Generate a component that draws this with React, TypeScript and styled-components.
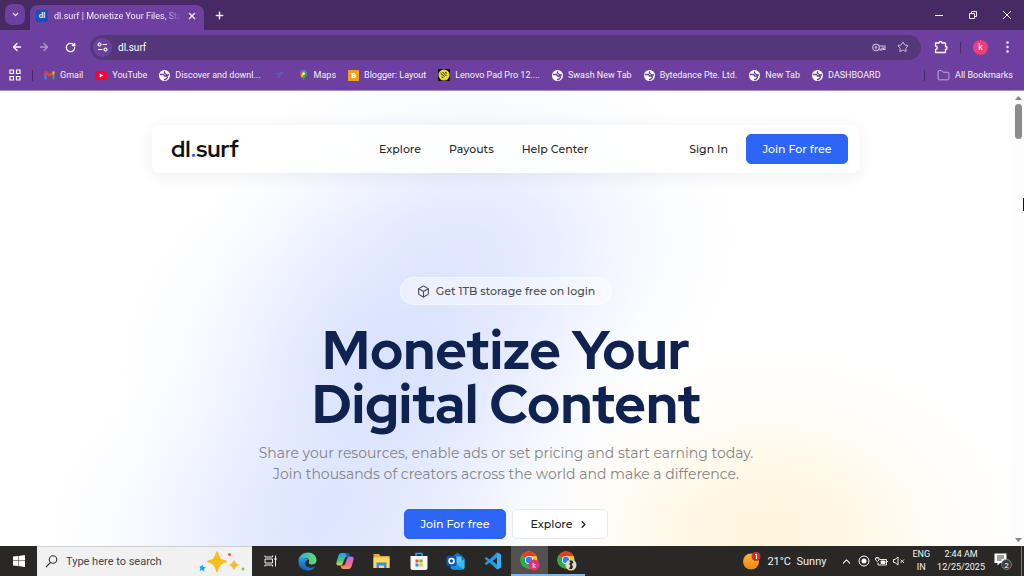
import React from "react";
import styled, { createGlobalStyle } from "styled-components";
import { ArrowLeft, ArrowRight, Box, ChevronDown, ChevronRight, ChevronUp, Folder, Plus, RotateCw, Star, X } from "lucide-react";

const uiFont = `"Segoe UI", Roboto, "Open Sans", sans-serif`;
const siteFont = `"Montserrat", Inter, sans-serif`;
const displayFont = `"Red Hat Display", "Montserrat", Inter, sans-serif`;

/* A soft round glow: strongest in the middle, fading out like a blurred disc. */
const glow = (rgb: string, alpha: number, size: string, at: string) =>
  `radial-gradient(ellipse ${size} at ${at}, rgba(${rgb}, ${alpha}), rgba(${rgb}, ${alpha * 0.82}) 25%, rgba(${rgb}, ${alpha * 0.45}) 50%, rgba(${rgb}, ${alpha * 0.13}) 75%, rgba(${rgb}, 0) 100%)`;

const GlobalStyle = createGlobalStyle`
  * { box-sizing: border-box; }
  body { margin: 0; background: #fff; }
  button { font: inherit; border: 0; padding: 0; margin: 0; background: none; color: inherit; cursor: pointer; }
  a { color: inherit; text-decoration: none; }
  svg { display: block; flex: none; }
`;

const Screen = styled.div`
  display: flex;
  flex-direction: column;
  height: 100vh;
  overflow: hidden;
  font-family: ${uiFont};
`;

/* Browser chrome */
const TabStrip = styled.div`
  display: flex;
  align-items: flex-end;
  height: 30px;
  flex: none;
  padding-left: 5px;
  background: #472a63;
  color: #f3eef8;
`;
const TabSearch = styled.button`
  display: grid;
  place-items: center;
  width: 20px;
  height: 21px;
  margin-bottom: 5px;
  border-radius: 7px;
  background: #6d409f;
`;
const Tab = styled.div`
  display: flex;
  align-items: center;
  width: 174px;
  height: 25px;
  margin-left: 5px;
  padding: 0 7px 4px 6px;
  gap: 6px;
  border-radius: 8px 8px 0 0;
  background: #6d409f;
  font-size: 9px;
`;
const Favicon = styled.span`
  display: grid;
  place-items: center;
  width: 12px;
  height: 12px;
  border-radius: 2px;
  background: #164fb5;
  font-size: 8px;
  line-height: 12px;
  font-weight: 600;
`;
const TabTitle = styled.span`
  flex: 1;
  min-width: 0;
  overflow: hidden;
  white-space: nowrap;
  mask-image: linear-gradient(90deg, #000 85%, transparent);
`;
const NewTab = styled.button`
  display: grid;
  place-items: center;
  width: 30px;
  height: 30px;
`;
const WindowControls = styled.div`
  display: flex;
  align-self: stretch;
  margin-left: auto;
`;
const WindowButton = styled.button`
  display: grid;
  place-items: center;
  width: 34px;
  height: 30px;
`;
const Toolbar = styled.div`
  display: flex;
  align-items: center;
  height: 34px;
  flex: none;
  padding: 0 3px;
  background: #6d409f;
  color: #fff;
`;
const ToolButton = styled.button<{ $dim?: boolean }>`
  display: grid;
  place-items: center;
  width: 27px;
  height: 26px;
  opacity: ${(p) => (p.$dim ? 0.45 : 1)};
`;
const AddressBar = styled.div`
  display: flex;
  align-items: center;
  flex: 1;
  height: 25px;
  margin: 0 6px;
  padding: 0 6px 0 3px;
  border-radius: 13px;
  background: #54367a;
`;
const SiteInfo = styled.button`
  display: grid;
  place-items: center;
  width: 19px;
  height: 19px;
  border-radius: 50%;
  background: #6d409f;
`;
const Address = styled.input`
  flex: 1;
  min-width: 0;
  margin-left: 6px;
  padding: 0;
  border: 0;
  outline: 0;
  background: transparent;
  color: #fff;
  font: 10px ${uiFont};
`;
const BarIcon = styled.button`
  display: grid;
  place-items: center;
  width: 24px;
  height: 24px;
  color: #cfc3dd;
`;
const Divider = styled.span`
  width: 1px;
  height: 11px;
  background: #482b66;
`;
const Avatar = styled.button`
  width: 15px;
  height: 15px;
  margin: 0 6px 0 12px;
  border-radius: 50%;
  background: #ec407a;
  font-size: 9px;
  line-height: 14px;
`;
const Bookmarks = styled.nav`
  display: flex;
  align-items: center;
  height: 27px;
  flex: none;
  padding: 0 11px 4px 9px;
  border-bottom: 1px solid #a78cc4;
  background: #6d409f;
  color: #f6f1fb;
  font-size: 9px;
  white-space: nowrap;
`;
const BookmarkList = styled.div`
  display: flex;
  flex: 1;
  align-items: center;
  gap: 12px;
  min-width: 0;
  margin-left: 11px;
  overflow: hidden;
`;
const Bookmark = styled.a`
  display: flex;
  align-items: center;
  gap: 5px;
`;
const AllBookmarks = styled.button`
  display: flex;
  align-items: center;
  gap: 5px;
  margin-left: 12px;
`;

/* Web page */
const Viewport = styled.div`
  position: relative;
  display: flex;
  flex: 1;
  min-height: 0;
`;
const Page = styled.main`
  flex: 1;
  min-width: 0;
  padding: 34px 24px 0;
  overflow: hidden;
  font-family: ${siteFont};
  background:
    ${glow("255, 243, 214", 0.85, "260px 190px", "76% 98%")},
    ${glow("206, 218, 255", 0.55, "270px 200px", "47% 33%")},
    ${glow("206, 218, 255", 0.75, "270px 230px", "38% 62%")},
    ${glow("206, 218, 255", 0.65, "270px 200px", "31% 98%")},
    #fff;
`;
const SiteHeader = styled.header`
  display: grid;
  grid-template-columns: 208px 1fr auto;
  align-items: center;
  max-width: 708px;
  height: 48px;
  margin: 0 auto;
  padding: 0 12px 0 19px;
  border-radius: 7px;
  background: rgba(255, 255, 255, 0.86);
  box-shadow: 0 3px 16px rgba(30, 30, 60, 0.07);
  color: #292929;
  font-size: 11px;
  font-weight: 500;
`;
const Logo = styled.a`
  color: #111;
  font-family: ${displayFont};
  font-size: 23px;
  line-height: 28px;
  font-weight: 700;
  span { color: #2d66f6; }
`;
const SiteLinks = styled.nav`
  display: flex;
  gap: 28px;
`;
const Account = styled.div`
  display: flex;
  align-items: center;
  gap: 18px;
`;
const Action = styled.button<{ $outline?: boolean }>`
  display: flex;
  align-items: center;
  justify-content: center;
  gap: 6px;
  width: ${(p) => (p.$outline ? 96 : 102)}px;
  height: 30px;
  border-radius: 5px;
  border: 1px solid ${(p) => (p.$outline ? "#e9eaf0" : "#2d66f6")};
  background: ${(p) => (p.$outline ? "#fff" : "#2d66f6")};
  color: ${(p) => (p.$outline ? "#222" : "#fff")};
  font-size: 11px;
  font-weight: 500;
`;
const Hero = styled.section`
  display: flex;
  flex-direction: column;
  align-items: center;
  padding-top: 104px;
  text-align: center;
`;
const Badge = styled.p`
  display: flex;
  align-items: center;
  gap: 6px;
  height: 28px;
  margin: 0;
  padding: 0 16px;
  border: 1px solid rgba(255, 255, 255, 0.45);
  border-radius: 14px;
  background: rgba(255, 255, 255, 0.42);
  color: #4d4d52;
  font-size: 11px;
  font-weight: 500;
`;
const Headline = styled.h1`
  margin: 18px 0 0;
  color: #102350;
  font-family: ${displayFont};
  font-size: 54px;
  line-height: 54px;
  font-weight: 800;
`;
const Lead = styled.p`
  margin: 12px 0 0;
  color: #858585;
  font-size: 14px;
  line-height: 21px;
`;
const Actions = styled.div`
  display: flex;
  gap: 6px;
  margin-top: 24px;
`;
const Scrollbar = styled.div`
  display: flex;
  flex-direction: column;
  align-items: center;
  justify-content: space-between;
  width: 12px;
  padding: 5px 0 4px;
  background: #fcfcfc;
`;
const Thumb = styled.span`
  width: 7px;
  height: 35px;
  margin: 4px 0 auto;
  border-radius: 4px;
  background: #8b8b8b;
`;
const Pointer = styled.span`
  position: absolute;
  right: 0;
  top: 107px;
  width: 1px;
  height: 13px;
  background: #111;
`;

/* Taskbar */
const Taskbar = styled.footer`
  display: flex;
  height: 30px;
  flex: none;
  background: #292827;
  color: #f2f2f2;
`;
const TaskButton = styled.button<{ $active?: boolean; $open?: boolean }>`
  display: grid;
  place-items: center;
  width: 37px;
  height: 30px;
  background: ${(p) => (p.$active ? "#525150" : "none")};
  box-shadow: ${(p) => (p.$open ? "inset 0 -2px #76b9ed" : "none")};
`;
const SearchBox = styled.label`
  display: flex;
  align-items: center;
  width: 215px;
  padding: 0 7px 0 8px;
  gap: 8px;
  background: #f1f1f1;
  border-top: 1px solid #cfcfcf;
  color: #333;
`;
const SearchInput = styled.input`
  flex: 1;
  min-width: 0;
  padding: 0;
  border: 0;
  outline: 0;
  background: transparent;
  font: 11px ${uiFont};
  &::placeholder { color: #444; opacity: 1; }
`;
const Tray = styled.div`
  display: flex;
  align-items: center;
  margin-left: auto;
  font-size: 11px;
  white-space: nowrap;
`;
const Weather = styled.button`
  display: flex;
  align-items: center;
  gap: 6px;
  margin-right: 14px;
`;
const TrayIcons = styled.div`
  display: flex;
  align-items: center;
  gap: 5px;
`;
const TrayText = styled.button`
  margin-left: 7px;
  font-size: 9px;
  line-height: 13px;
  text-align: center;
`;
const Notifications = styled.button`
  margin: 0 9px 0 9px;
`;
const ShowDesktop = styled.button`
  width: 3px;
  height: 30px;
  border-left: 1px solid #777;
`;

const Globe = () => (
  <svg width="11" height="11" viewBox="0 0 22 22">
    <circle cx="11" cy="11" r="11" fill="#fff" />
    <path d="M2 9h6q3 0 3 3h3q3 0 3 3l-4 4h-3M12 3q-3 3 0 4t3 3h5" fill="none" stroke="#6d409f" strokeWidth="2.6" />
  </svg>
);
const GmailIcon = () => (
  <svg width="11" height="9" viewBox="0 0 22 18">
    <path d="M1 4v13h4V8z" fill="#4285f4" /><path d="M17 8v9h4V4z" fill="#34a853" />
    <path d="M1 5V2c0-2 2-2 4-1l6 5 6-5v6l-6 5-6-5z" fill="#ea4335" /><path d="M17 1c2-1 4-1 4 1v3l-4 4z" fill="#fbbc04" />
  </svg>
);
const YouTubeIcon = () => (
  <svg width="12" height="9" viewBox="0 0 24 18"><rect width="24" height="18" rx="5" fill="#ff0033" /><path d="M9.500 5v8l7-4z" fill="#fff" /></svg>
);
const PlaneIcon = () => (
  <svg width="13" height="10" viewBox="0 0 26 20" fill="none" stroke="#6260c4" strokeWidth="1.600"><path d="M7 7l13-2-9 11-1-6zM11 10l7-4" /></svg>
);
const MapsIcon = () => (
  <svg width="11" height="12" viewBox="0 0 22 24">
    <path d="M11 23c-1-6-7-8-7-14a7 7 0 0114 0c0 6-6 8-7 14z" fill="#34a853" />
    <path d="M4 9a7 7 0 013-6l5 5-6 7c-1-2-2-4-2-6z" fill="#ea4335" /><path d="M7 3c3-2 7-1 9 1l-5 6z" fill="#4285f4" />
    <path d="M5 13l6-6 2 4-5 6z" fill="#fbbc04" /><circle cx="11" cy="9" r="2.500" fill="#fff" />
  </svg>
);
const BloggerIcon = () => (
  <svg width="11" height="11" viewBox="0 0 22 22"><rect width="22" height="22" rx="1" fill="#f79b25" /><path d="M7 6h5a3 3 0 013 4 3 3 0 011 3c0 2-1 3-3 3H7z" fill="#fff" /><path d="M10 9h2M10 13h3" stroke="#f79b25" strokeWidth="1.500" /></svg>
);
const LenovoIcon = () => (
  <svg width="12" height="12" viewBox="0 0 24 24"><rect width="24" height="24" fill="#111" /><circle cx="12" cy="12" r="11" fill="#e6df2c" /><path d="M5 8l8 7M9 6l8 8M7 15l4 3M14 6l4 3" fill="none" stroke="#222" strokeWidth="2" /></svg>
);

const bookmarks: { label: string; icon: React.ReactNode }[] = [
  { label: "Gmail", icon: <GmailIcon /> },
  { label: "YouTube", icon: <YouTubeIcon /> },
  { label: "Discover and downl...", icon: <Globe /> },
  { label: "", icon: <PlaneIcon /> },
  { label: "Maps", icon: <MapsIcon /> },
  { label: "Blogger: Layout", icon: <BloggerIcon /> },
  { label: "Lenovo Pad Pro 12....", icon: <LenovoIcon /> },
  { label: "Swash New Tab", icon: <Globe /> },
  { label: "Bytedance Pte. Ltd.", icon: <Globe /> },
  { label: "New Tab", icon: <Globe /> },
  { label: "DASHBOARD", icon: <Globe /> },
];

const EdgeIcon = () => (
  <svg width="19" height="19" viewBox="0 0 38 38">
    <defs>
      <linearGradient id="edgeTop" x1="0" x2="1"><stop stopColor="#2ba9e8" /><stop offset="1" stopColor="#65df69" /></linearGradient>
      <linearGradient id="edgeBody" x1="0" y1="0" x2="0" y2="1"><stop stopColor="#239ee2" /><stop offset="1" stopColor="#0c5cb3" /></linearGradient>
    </defs>
    <path d="M1 18C2 7 10 1 20 1c10 0 17 7 17 15 0 7-5 9-10 9-4 0-7-2-5-5 2-4-2-8-8-8S3 14 1 18z" fill="url(#edgeTop)" />
    <path d="M1 20c0-6 6-9 12-8 4 0 7 2 8 4-8 0-10 14 3 16 4 0 7-1 10-3-3 5-8 8-15 8C8 37 1 29 1 20z" fill="url(#edgeBody)" />
    <path d="M14 21c-1 8 9 14 20 8-4 6-9 8-15 8-8-3-9-12-5-16z" fill="#1373c5" />
  </svg>
);
const CopilotIcon = () => (
  <svg width="18" height="18" viewBox="0 0 36 36">
    <defs>
      <linearGradient id="copLeft" x1="0" y1="0" x2="0" y2="1"><stop stopColor="#20a6ec" /><stop offset=".6" stopColor="#42c878" /><stop offset="1" stopColor="#edc832" /></linearGradient>
      <linearGradient id="copRight" x1="0" y1="0" x2="0" y2="1"><stop stopColor="#a66df2" /><stop offset=".6" stopColor="#f16b91" /><stop offset="1" stopColor="#f49b50" /></linearGradient>
    </defs>
    <path d="M11 2h11c3 0 4 3 5 7h-5c-3 0-4 2-5 5l-3 8c-1 4-3 5-6 5H5c-4 0-5-3-4-7l4-13c1-3 3-5 6-5z" fill="url(#copLeft)" />
    <path d="M25 34H14c-3 0-4-3-5-7h5c3 0 4-2 5-5l3-8c1-4 3-5 6-5h3c4 0 5 3 4 7l-4 13c-1 3-3 5-6 5z" fill="url(#copRight)" />
    <path d="M17 2h5c3 0 4 3 5 7h-5c-2-1-2-5-5-7z" fill="#2258c5" />
  </svg>
);
const ExplorerIcon = () => (
  <svg width="17" height="16" viewBox="0 0 34 32"><path d="M1 2h11l3 4h18v24H1z" fill="#e8a92e" /><path d="M1 9h32v21H1z" fill="#ffd66b" /><path d="M7 30V19h20v11h-5v-5H12v5z" fill="#3d8fd1" /></svg>
);
const StoreIcon = () => (
  <svg width="18" height="19" viewBox="0 0 36 38">
    <path d="M12 9V3h12v6" fill="none" stroke="#27a5dd" strokeWidth="3" /><path d="M1 8h34v24a4 4 0 01-4 4H5a4 4 0 01-4-4z" fill="#f6f6f6" />
    <path d="M11 15h6v6h-6z" fill="#f25022" /><path d="M19 15h6v6h-6z" fill="#7fba00" /><path d="M11 23h6v6h-6z" fill="#00a4ef" /><path d="M19 23h6v6h-6z" fill="#ffb900" />
  </svg>
);
const OutlookIcon = () => (
  <svg width="19" height="18" viewBox="0 0 38 36">
    <path d="M9 12L23 1l14 11v18a4 4 0 01-4 4H10z" fill="#176cc4" /><path d="M13 9h18v13H13z" fill="#5fc4f4" /><path d="M9 30l28-16v17a4 4 0 01-4 4H13z" fill="#38bdf0" /><path d="M9 17l26 17H12c-2 0-3-2-3-4z" fill="#188fdd" />
    <rect x="1" y="8" width="20" height="20" rx="3" fill="#0a58b6" /><circle cx="11" cy="18" r="5" fill="none" stroke="#fff" strokeWidth="3" />
  </svg>
);
const CodeIcon = () => (
  <svg width="18" height="18" viewBox="0 0 36 36"><path d="M26 1l8 4v26l-8 4L11 21l-6 5-4-3 6-5-6-5 4-3 6 5zM26 11l-9 7 9 7z" fill="#239ce8" fillRule="evenodd" /><path d="M26 1l8 4v26l-8 4z" fill="#35aff3" /></svg>
);
const ChromeIcon = ({ profile }: { profile: "letter" | "photo" }) => (
  <svg width="20" height="20" viewBox="0 0 40 40">
    <circle cx="18" cy="18" r="17" fill="#fbc116" /><path d="M18 18L3 9.500C10-2 27-2 33 10H18z" fill="#e33b2e" /><path d="M18 18L3 9.500c-7 12 2 25 14 25.500l7-13z" fill="#2da94f" />
    <circle cx="18" cy="18" r="8" fill="#fff" /><circle cx="18" cy="18" r="6.500" fill="#377de8" />
    <circle cx="28" cy="28" r="11" fill={profile === "letter" ? "#e52e78" : "#ded9c9"} />
    {profile === "letter" ? <text x="28" y="33" fill="#fff" fontSize="14" textAnchor="middle">k</text> : <path d="M24 19h7l2 5-4 2 3 5-2 5h-6l3-7-3-3 3-3z" fill="#28251f" />}
  </svg>
);
const SparklesIcon = () => (
  <svg width="46" height="22" viewBox="0 0 92 44">
    <path d="M36 2C40 16 43 19 55 21C43 24 40 27 36 41C32 27 29 24 17 21C29 19 32 16 36 2z" fill="#f9bd20" stroke="#f9bd20" strokeWidth="3" strokeLinejoin="round" /><path d="M70 19q2 7 9 9-7 2-9 9-2-7-9-9 7-2 9-9z" fill="#f7b928" stroke="#f7b928" strokeWidth="1.500" />
    <path d="M7 27l2 5 5 1-4 3 1 5-5-3-5 2 2-5-2-4 5-1z" fill="#1da5e6" /><circle cx="61" cy="7" r="3" fill="#ef5a3a" /><circle cx="88" cy="36" r="3" fill="#86c847" />
  </svg>
);

const apps = [
  { name: "Edge", icon: <EdgeIcon /> },
  { name: "Copilot", icon: <CopilotIcon /> },
  { name: "File Explorer", icon: <ExplorerIcon /> },
  { name: "Store", icon: <StoreIcon /> },
  { name: "Outlook", icon: <OutlookIcon /> },
  { name: "Code", icon: <CodeIcon /> },
  { name: "Chrome", icon: <ChromeIcon profile="letter" />, active: true, open: true },
  { name: "Chrome second profile", icon: <ChromeIcon profile="photo" />, open: true },
];

export default function App() {
  return (
    <Screen>
      <GlobalStyle />
      <TabStrip>
        <TabSearch aria-label="Search tabs"><ChevronDown size={9} strokeWidth={3} /></TabSearch>
        <Tab>
          <Favicon>dl</Favicon>
          <TabTitle>dl.surf | Monetize Your Files, Sta</TabTitle>
          <button aria-label="Close tab"><X size={10} strokeWidth={3} /></button>
        </Tab>
        <NewTab aria-label="New tab"><Plus size={11} strokeWidth={3} /></NewTab>
        <WindowControls>
          <WindowButton aria-label="Minimize"><svg width="8" height="8" viewBox="0 0 8 8"><path d="M0 4.500h8" stroke="#fff" /></svg></WindowButton>
          <WindowButton aria-label="Restore"><svg width="8" height="8" viewBox="0 0 16 16" fill="none" stroke="#fff" strokeWidth="1.800"><path d="M1 5h10v10H1zM5 5V1h10v10h-4" /></svg></WindowButton>
          <WindowButton aria-label="Close"><svg width="8" height="8" viewBox="0 0 8 8"><path d="M0 0l8 8M8 0L0 8" stroke="#fff" /></svg></WindowButton>
        </WindowControls>
      </TabStrip>
      <Toolbar>
        <ToolButton aria-label="Back"><ArrowLeft size={12} strokeWidth={2.6} /></ToolButton>
        <ToolButton aria-label="Forward" $dim><ArrowRight size={12} strokeWidth={2.6} /></ToolButton>
        <ToolButton aria-label="Reload"><RotateCw size={11} strokeWidth={3} /></ToolButton>
        <AddressBar>
          <SiteInfo aria-label="Site information">
            <svg width="11" height="10" viewBox="0 0 22 20" fill="none" stroke="#fff" strokeWidth="2.200"><circle cx="5" cy="5" r="3" /><path d="M11 5h9M2 15h9" /><circle cx="17" cy="15" r="3" /></svg>
          </SiteInfo>
          <Address aria-label="Address" defaultValue="dl.surf" />
          <BarIcon aria-label="Passwords">
            <svg width="14" height="9" viewBox="0 0 28 18" fill="none" stroke="currentColor" strokeWidth="2.200"><circle cx="8" cy="9" r="6.500" /><circle cx="8" cy="9" r="1.500" /><path d="M14 6h12v7h-3v-3h-3v4h-4v-3" /></svg>
          </BarIcon>
          <BarIcon aria-label="Bookmark this page"><Star size={12} strokeWidth={2} /></BarIcon>
        </AddressBar>
        <ToolButton aria-label="Extensions">
          <svg width="14" height="14" viewBox="0 0 28 28" fill="none" stroke="#fff" strokeWidth="2.600" strokeLinejoin="round"><path d="M3 6h7a3 3 0 016 0h7v7a3 3 0 010 6v6H3v-6a3.500 3.500 0 000-7z" /></svg>
        </ToolButton>
        <Divider style={{ marginLeft: 6 }} />
        <Avatar aria-label="Profile">k</Avatar>
        <ToolButton aria-label="Menu"><svg width="3" height="12" viewBox="0 0 3 12" fill="#fff"><circle cx="1.500" cy="1.500" r="1.200" /><circle cx="1.500" cy="6" r="1.200" /><circle cx="1.500" cy="10.500" r="1.200" /></svg></ToolButton>
      </Toolbar>
      <Bookmarks aria-label="Bookmarks">
        <button aria-label="Apps"><svg width="12" height="12" viewBox="0 0 24 24" fill="none" stroke="#fff" strokeWidth="2.400"><path d="M2 2h7v7H2zM15 2h7v7h-7zM2 15h7v7H2zM15 15h7v7h-7z" /></svg></button>
        <Divider style={{ marginLeft: 11 }} />
        <BookmarkList>
          {bookmarks.map((b) => (
            <Bookmark key={b.label || "plane"} href="#" aria-label={b.label || "Untitled bookmark"}>{b.icon}{b.label && <span>{b.label}</span>}</Bookmark>
          ))}
        </BookmarkList>
        <Divider />
        <AllBookmarks><Folder size={13} strokeWidth={1.8} color="#c3b2d6" />All Bookmarks</AllBookmarks>
      </Bookmarks>

      <Viewport>
        <Page>
          <SiteHeader>
            <Logo href="#">dl<span>.</span>surf</Logo>
            <SiteLinks aria-label="Site">
              <a href="#">Explore</a>
              <a href="#">Payouts</a>
              <a href="#">Help Center</a>
            </SiteLinks>
            <Account>
              <a href="#">Sign In</a>
              <Action>Join For free</Action>
            </Account>
          </SiteHeader>
          <Hero>
            <Badge><Box size={13} strokeWidth={2} />Get 1TB storage free on login</Badge>
            <Headline>Monetize Your<br />Digital Content</Headline>
            <Lead>Share your resources, enable ads or set pricing and start earning today.<br />Join thousands of creators across the world and make a difference.</Lead>
            <Actions>
              <Action>Join For free</Action>
              <Action $outline>Explore <ChevronRight size={11} strokeWidth={3} /></Action>
            </Actions>
          </Hero>
        </Page>
        <Scrollbar aria-hidden>
          <svg width="7" height="4" viewBox="0 0 7 4"><path d="M0 4l3.500-4L7 4z" fill="#858585" /></svg>
          <Thumb />
          <svg width="7" height="4" viewBox="0 0 7 4"><path d="M0 0l3.500 4L7 0z" fill="#858585" /></svg>
        </Scrollbar>
        <Pointer />
      </Viewport>

      <Taskbar>
        <TaskButton aria-label="Start"><svg width="12" height="12" viewBox="0 0 24 24" fill="#fff"><path d="M0 3l10-1v9H0zM11 2l13-2v11H11zM0 12h10v10L0 21zM11 12h13v12l-13-2z" /></svg></TaskButton>
        <SearchBox>
          <svg width="13" height="13" viewBox="0 0 26 26" fill="none" stroke="#333" strokeWidth="2.200"><circle cx="16" cy="9" r="7.500" /><path d="M11 15L2 24" /></svg>
          <SearchInput aria-label="Search" placeholder="Type here to search" />
          <SparklesIcon />
        </SearchBox>
        <TaskButton aria-label="Task view"><svg width="13" height="12" viewBox="0 0 26 24" fill="none" stroke="#f0f0f0" strokeWidth="2"><path d="M2 1v3h15V1M2 8h15v8H2zM2 23v-3h15v3M23 1v5M23 10v13" /><path d="M21 8h4" strokeWidth="4" /></svg></TaskButton>
        {apps.map((a) => (
          <TaskButton key={a.name} aria-label={a.name} $active={a.active} $open={a.open}>{a.icon}</TaskButton>
        ))}
        <Tray>
          <Weather>
            <svg width="18" height="18" viewBox="0 0 36 36"><defs><linearGradient id="sun" x1="0" y1="0" x2="0" y2="1"><stop stopColor="#fdb82d" /><stop offset="1" stopColor="#ee8510" /></linearGradient></defs><circle cx="16" cy="19" r="16" fill="url(#sun)" /><circle cx="26" cy="9" r="9" fill="#d12e2b" /><path d="M24 6l3-2v10" fill="none" stroke="#fff" strokeWidth="2" /></svg>
            <span>21°C&nbsp; Sunny</span>
          </Weather>
          <TrayIcons>
            <ChevronUp size={13} strokeWidth={2} />
            <svg width="12" height="12" viewBox="0 0 24 24"><circle cx="12" cy="12" r="10" fill="none" stroke="#fff" strokeWidth="2" /><circle cx="12" cy="12" r="5" fill="#fff" /></svg>
            <svg width="13" height="9" viewBox="0 0 26 18" fill="none" stroke="#fff" strokeWidth="1.800"><path d="M9 5h14v11H6v-5M24 9h2M1 2h7v4L5 9 1 6zM3 0v2M6 0v2" /><path d="M12 8h8v5h-8z" fill="#fff" /></svg>
            <svg width="12" height="10" viewBox="0 0 24 20" fill="none" stroke="#fff" strokeWidth="1.800"><path d="M1 7h3l6-5v16l-6-5H1zM15 7l7 7M22 7l-7 7" /></svg>
          </TrayIcons>
          <TrayText>ENG<br />IN</TrayText>
          <TrayText>2:44 AM<br />12/25/2025</TrayText>
          <Notifications aria-label="Notifications">
            <svg width="18" height="18" viewBox="0 0 36 36"><path d="M1 3h24v19H12l-5 5v-5H1z" fill="#fff" /><path d="M6 8h14M6 12h14M6 16h9" stroke="#292827" strokeWidth="1.800" /><circle cx="25" cy="25" r="10" fill="#3b3b3b" stroke="#999" strokeWidth="1.500" /><text x="25" y="31" fill="#fff" fontSize="16" textAnchor="middle">2</text></svg>
          </Notifications>
          <ShowDesktop aria-label="Show desktop" />
        </Tray>
      </Taskbar>
    </Screen>
  );
}
